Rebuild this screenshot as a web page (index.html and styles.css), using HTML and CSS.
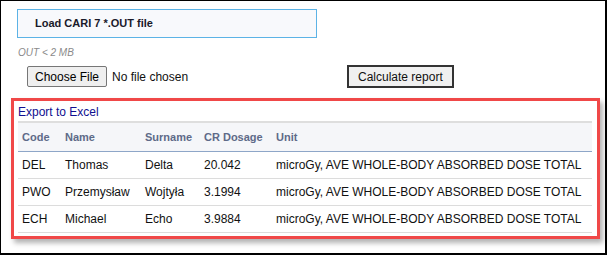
FILE: index.html
```html
<!DOCTYPE html>
<html lang="en">
<head>
    <meta charset="UTF-8">
    <meta name="viewport" content="width=device-width, initial-scale=1.0">
    <title>CARI 7 Report</title>
    <link rel="stylesheet" href="styles.css">
</head>
<body>
    <div class="frame">
        <div class="upload-box">Load CARI 7 *.OUT file</div>
        <div class="hint">OUT &lt; 2 MB</div>
        <div class="actions">
            <input type="file" id="fileInput" class="file-input">
            <button id="calcButton" class="calc-button">Calculate report</button>
        </div>
        <div class="report">
            <a href="#" class="export-link">Export to Excel</a>
            <table class="report-table">
                <thead>
                    <tr>
                        <th class="col-code">Code</th>
                        <th class="col-name">Name</th>
                        <th class="col-surname">Surname</th>
                        <th class="col-dose">CR Dosage</th>
                        <th>Unit</th>
                    </tr>
                </thead>
                <tbody>
                    <tr>
                        <td>DEL</td>
                        <td>Thomas</td>
                        <td>Delta</td>
                        <td>20.042</td>
                        <td>microGy, AVE WHOLE-BODY ABSORBED DOSE TOTAL</td>
                    </tr>
                    <tr>
                        <td>PWO</td>
                        <td>Przemysław</td>
                        <td>Wojtyła</td>
                        <td>3.1994</td>
                        <td>microGy, AVE WHOLE-BODY ABSORBED DOSE TOTAL</td>
                    </tr>
                    <tr>
                        <td>ECH</td>
                        <td>Michael</td>
                        <td>Echo</td>
                        <td>3.9884</td>
                        <td>microGy, AVE WHOLE-BODY ABSORBED DOSE TOTAL</td>
                    </tr>
                </tbody>
            </table>
        </div>
    </div>
</body>
</html>
```

FILE: styles.css
```css
body {
    margin: 0;
    padding: 0;
    background-color: #fff;
    font-family: 'Liberation Sans', Arial, sans-serif;
    color: #111;
}
.frame {
    box-sizing: border-box;
    width: 607px;
    height: 255px;
    border: 1px solid #000;
    border-right-width: 2px;
    border-bottom-width: 2px;
    padding: 8px 0 0 16px;
}
.upload-box {
    box-sizing: border-box;
    width: 300px;
    height: 29px;
    border: 1px solid #5cb3e6;
    background-color: #f8f9fc;
    padding: 7px 0 0 17px;
    font-size: 11px;
    font-weight: bold;
    color: #1a1a2a;
}
.hint {
    margin: 9px 0 0 1px;
    font-size: 10px;
    font-style: italic;
    color: #8a8a8a;
}
.actions {
    display: flex;
    align-items: center;
    margin: 7px 0 0 10px;
}
.file-input {
    width: 240px;
    font-family: 'Liberation Sans', Arial, sans-serif;
    font-size: 12px;
    color: #111;
}
.file-input::file-selector-button {
    font-family: 'Liberation Sans', Arial, sans-serif;
    font-size: 12px;
    height: 21px;
    padding: 0 7px;
    margin-right: 5px;
    background-color: #efefef;
    border: 1px solid #767676;
    border-radius: 2px;
}
.calc-button {
    margin-left: 80px;
    height: 23px;
    padding: 0 9px;
    font-family: 'Liberation Sans', Arial, sans-serif;
    font-size: 12px;
    color: #111;
    background-color: #f0f0f0;
    border: 2px solid #333;
}
.report {
    box-sizing: border-box;
    width: 589px;
    height: 141px;
    margin: 10px 0 0 -6px;
    border: 3px solid #f04848;
    box-shadow: 3px 4px 5px rgba(0, 0, 0, 0.3);
    padding: 4px 4px 0 4px;
}
.export-link {
    display: block;
    font-size: 12px;
    color: #101090;
    text-decoration: none;
    height: 14px;
}
.report-table {
    width: 574px;
    margin-top: 2px;
    border-collapse: collapse;
    font-size: 12px;
}
.report-table th,
.report-table td {
    box-sizing: border-box;
    padding: 0 4px;
    text-align: left;
    white-space: nowrap;
}
.col-code { width: 43px; }
.col-name { width: 80px; }
.col-surname { width: 59px; }
.col-dose { width: 72px; }
.report-table thead tr {
    background-color: #f5f6f9;
    border-top: 2px solid #dedede;
    border-bottom: 1px solid #8ea6c8;
}
.report-table th {
    height: 29px;
    font-size: 11px;
    font-weight: bold;
    color: #5e6a88;
}
.report-table td {
    height: 27px;
    border-bottom: 1px solid #dcdcdc;
}
```
